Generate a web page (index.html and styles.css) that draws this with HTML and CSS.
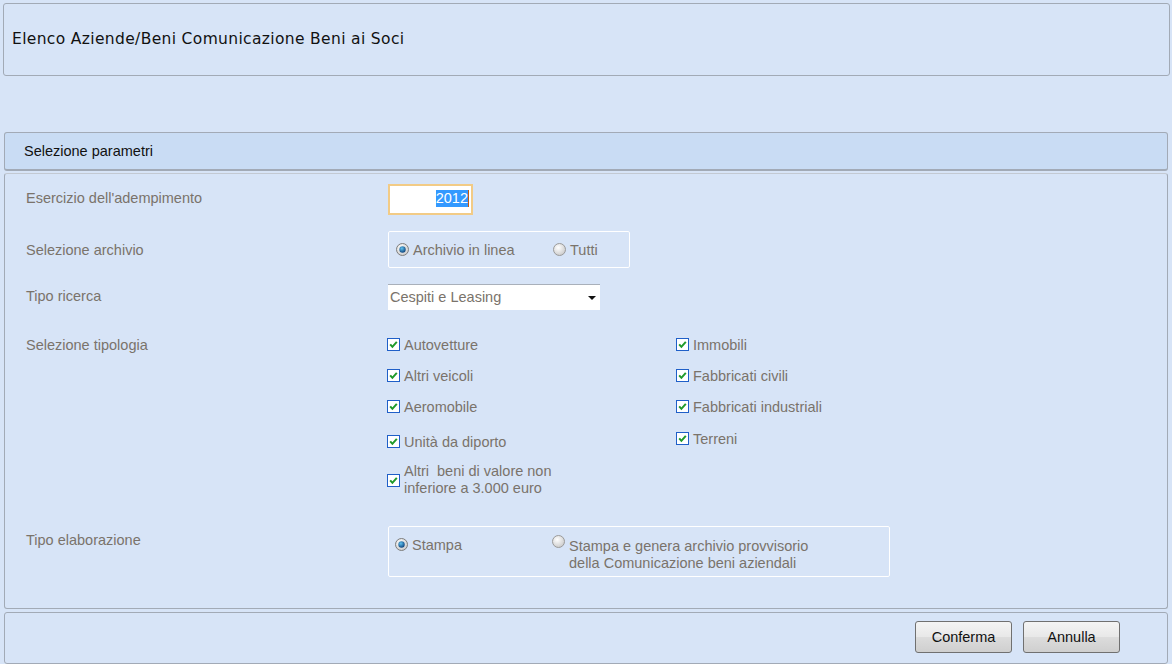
FILE: index.html
```html
<!DOCTYPE html>
<html lang="it">
<head>
<meta charset="utf-8">
<title>Elenco Aziende/Beni Comunicazione Beni ai Soci</title>
<link rel="stylesheet" href="styles.css">
</head>
<body>
<div class="page">
  <div class="title-box">Elenco Aziende/Beni Comunicazione Beni ai Soci</div>

  <div class="section-head">Selezione parametri</div>

  <div class="panel">
    <div class="row row-anno">
      <div class="label">Esercizio dell'adempimento</div>
      <div class="ctrl">
        <div class="year-input"><span class="sel">2012</span></div>
      </div>
    </div>

    <div class="row row-archivio">
      <div class="label">Selezione archivio</div>
      <div class="ctrl">
        <div class="group group-archivio">
          <label class="radio r-linea">
            <svg class="rd" width="13" height="13" viewBox="0 0 13 13"><defs><radialGradient id="rg1" cx="0.4" cy="0.35" r="0.7"><stop offset="0" stop-color="#ffffff"/><stop offset="1" stop-color="#c9c9c9"/></radialGradient><radialGradient id="dot1" cx="0.4" cy="0.35" r="0.7"><stop offset="0" stop-color="#5fc2f0"/><stop offset="1" stop-color="#0b3e78"/></radialGradient></defs><circle cx="6.5" cy="6.5" r="6" fill="url(#rg1)" stroke="#7d7d7d"/><circle cx="6.5" cy="6.5" r="3.2" fill="url(#dot1)"/></svg>
            <span>Archivio in linea</span>
          </label>
          <label class="radio r-tutti">
            <svg class="rd" width="13" height="13" viewBox="0 0 13 13"><circle cx="6.5" cy="6.5" r="6" fill="url(#rg1)" stroke="#9a9a9a"/></svg>
            <span>Tutti</span>
          </label>
        </div>
      </div>
    </div>

    <div class="row row-ricerca">
      <div class="label">Tipo ricerca</div>
      <div class="ctrl">
        <div class="select"><span>Cespiti e Leasing</span><span class="arrow"></span></div>
      </div>
    </div>

    <div class="row row-tipologia">
      <div class="label">Selezione tipologia</div>
      <div class="ctrl checks">
        <div class="col col1">
          <label class="cb"><svg width="13" height="13" viewBox="0 0 13 13"><rect x="0.5" y="0.5" width="12" height="12" fill="#fff" stroke="#1f5fc8"/><path d="M3.2 6.3 L5.4 8.8 L9.8 3.8" fill="none" stroke="#1f9a2a" stroke-width="2"/></svg><span>Autovetture</span></label>
          <label class="cb"><svg width="13" height="13" viewBox="0 0 13 13"><rect x="0.5" y="0.5" width="12" height="12" fill="#fff" stroke="#1f5fc8"/><path d="M3.2 6.3 L5.4 8.8 L9.8 3.8" fill="none" stroke="#1f9a2a" stroke-width="2"/></svg><span>Altri veicoli</span></label>
          <label class="cb"><svg width="13" height="13" viewBox="0 0 13 13"><rect x="0.5" y="0.5" width="12" height="12" fill="#fff" stroke="#1f5fc8"/><path d="M3.2 6.3 L5.4 8.8 L9.8 3.8" fill="none" stroke="#1f9a2a" stroke-width="2"/></svg><span>Aeromobile</span></label>
          <label class="cb cb-diporto"><svg width="13" height="13" viewBox="0 0 13 13"><rect x="0.5" y="0.5" width="12" height="12" fill="#fff" stroke="#1f5fc8"/><path d="M3.2 6.3 L5.4 8.8 L9.8 3.8" fill="none" stroke="#1f9a2a" stroke-width="2"/></svg><span>Unità da diporto</span></label>
          <label class="cb cb-altri"><svg width="13" height="13" viewBox="0 0 13 13"><rect x="0.5" y="0.5" width="12" height="12" fill="#fff" stroke="#1f5fc8"/><path d="M3.2 6.3 L5.4 8.8 L9.8 3.8" fill="none" stroke="#1f9a2a" stroke-width="2"/></svg><span>Altri&nbsp; beni di valore non<br>inferiore a 3.000 euro</span></label>
        </div>
        <div class="col col2">
          <label class="cb"><svg width="13" height="13" viewBox="0 0 13 13"><rect x="0.5" y="0.5" width="12" height="12" fill="#fff" stroke="#1f5fc8"/><path d="M3.2 6.3 L5.4 8.8 L9.8 3.8" fill="none" stroke="#1f9a2a" stroke-width="2"/></svg><span>Immobili</span></label>
          <label class="cb"><svg width="13" height="13" viewBox="0 0 13 13"><rect x="0.5" y="0.5" width="12" height="12" fill="#fff" stroke="#1f5fc8"/><path d="M3.2 6.3 L5.4 8.8 L9.8 3.8" fill="none" stroke="#1f9a2a" stroke-width="2"/></svg><span>Fabbricati civili</span></label>
          <label class="cb"><svg width="13" height="13" viewBox="0 0 13 13"><rect x="0.5" y="0.5" width="12" height="12" fill="#fff" stroke="#1f5fc8"/><path d="M3.2 6.3 L5.4 8.8 L9.8 3.8" fill="none" stroke="#1f9a2a" stroke-width="2"/></svg><span>Fabbricati industriali</span></label>
          <label class="cb cb-terreni"><svg width="13" height="13" viewBox="0 0 13 13"><rect x="0.5" y="0.5" width="12" height="12" fill="#fff" stroke="#1f5fc8"/><path d="M3.2 6.3 L5.4 8.8 L9.8 3.8" fill="none" stroke="#1f9a2a" stroke-width="2"/></svg><span>Terreni</span></label>
        </div>
      </div>
    </div>

    <div class="row row-elab">
      <div class="label">Tipo elaborazione</div>
      <div class="ctrl">
        <div class="group group-elab">
          <label class="radio r-stampa">
            <svg class="rd" width="13" height="13" viewBox="0 0 13 13"><circle cx="6.5" cy="6.5" r="6" fill="url(#rg1)" stroke="#7d7d7d"/><circle cx="6.5" cy="6.5" r="3.2" fill="url(#dot1)"/></svg>
            <span>Stampa</span>
          </label>
          <label class="radio r-genera">
            <svg class="rd" width="13" height="13" viewBox="0 0 13 13"><circle cx="6.5" cy="6.5" r="6" fill="url(#rg1)" stroke="#9a9a9a"/></svg>
            <span>Stampa e genera archivio provvisorio<br>della Comunicazione beni aziendali</span>
          </label>
        </div>
      </div>
    </div>
  </div>

  <div class="footer">
    <button class="btn">Conferma</button>
    <button class="btn">Annulla</button>
  </div>
</div>
</body>
</html>
```

FILE: styles.css
```css
* { box-sizing: border-box; }
html, body {
  margin: 0;
  padding: 0;
  background: #d7e4f7;
  width: 1172px;
  height: 664px;
  overflow: hidden;
}
body {
  font-family: "Liberation Sans", Arial, sans-serif;
  font-size: 14.5px;
}
.page {
  padding: 3px 2px 0 3px;
  display: flex;
  flex-direction: column;
}
.title-box {
  height: 73px;
  border: 1px solid #a2aab6;
  border-radius: 3px;
  display: flex;
  align-items: center;
  padding: 0 0 2px 8px;
  font-family: "DejaVu Sans", Verdana, sans-serif;
  font-size: 15.5px;
  letter-spacing: 0.35px;
  color: #111;
}
.section-head {
  margin: 56px 2px 0 1px;
  height: 39px;
  background: #c9dcf4;
  border: 1px solid #a2aab6;
  border-bottom-width: 2px;
  border-radius: 3px;
  display: flex;
  align-items: center;
  padding-left: 19px;
  color: #111;
}
.panel {
  margin: 2px 2px 0 1px;
  height: 436px;
  border: 1px solid #a2aab6;
  border-top-color: #c3c9d2;
  border-radius: 3px;
  padding: 10px 0 0 21px;
  display: flex;
  flex-direction: column;
  color: #7a736b;
}
.row {
  display: flex;
}
.label {
  width: 362px;
  flex: none;
}
.row-anno { height: 31px; align-items: center; }
.row-anno .label { margin-top: -3px; }
.row-archivio { margin-top: 16px; height: 37px; align-items: center; }
.row-ricerca { margin-top: 16px; height: 26px; align-items: center; }
.row-ricerca .label { margin-top: -2px; }
.row-tipologia { margin-top: 26px; }
.row-tipologia .label { padding-top: 1px; }
.row-elab { margin-top: 15px; }
.row-elab .label { padding-top: 6px; }

.year-input {
  width: 85px;
  height: 31px;
  background: #fff;
  border: 2px solid #f2cb86;
  display: flex;
  align-items: center;
  justify-content: flex-end;
  padding: 0 2px 3px 0;
}
.sel {
  background: #3399ff;
  color: #fff;
  line-height: 17px;
  border-right: 1px solid #c05a10;
}
.group {
  border: 1px solid #fff;
  border-radius: 2px;
  display: flex;
  position: relative;
}
.group-archivio {
  width: 242px;
  height: 37px;
  align-items: center;
  padding-left: 7px;
}
.radio {
  display: flex;
  align-items: center;
  gap: 4px;
}
.radio .rd { flex: none; }
.r-linea { width: 157px; }
.select {
  width: 212px;
  height: 26px;
  background: #fff;
  border-top: 1px solid #a9b0ba;
  display: flex;
  align-items: center;
  justify-content: space-between;
  padding: 0 4px 1px 2px;
}
.arrow {
  width: 0;
  height: 0;
  border-left: 4px solid transparent;
  border-right: 4px solid transparent;
  border-top: 4px solid #111;
  margin-top: 1px;
}
.checks {
  display: flex;
  margin-left: -1px;
}
.col {
  display: flex;
  flex-direction: column;
}
.col1 { width: 289px; }
.cb {
  display: flex;
  align-items: center;
  gap: 4px;
  height: 17px;
  margin-bottom: 14px;
}
.cb svg { flex: none; }
.cb-diporto { margin-top: 4px; }
.cb-terreni { margin-top: 1px; }
.cb-altri {
  height: 34px;
  margin-top: -1px;
  line-height: 17px;
}
.group-elab {
  width: 502px;
  height: 51px;
  padding: 9px 0 0 6px;
  align-items: flex-start;
}
.r-stampa { width: 157px; align-items: center; height: 17px; }
.r-genera { align-items: flex-start; line-height: 17px; padding-top: 2px; }
.r-genera .rd { margin-top: -3px; }

.footer {
  margin: 3px 2px 0 1px;
  height: 52px;
  border: 1px solid #a2aab6;
  border-radius: 3px;
  display: flex;
  justify-content: flex-end;
  align-items: flex-start;
  padding: 8px 47px 0 0;
  gap: 11px;
}
.btn {
  width: 97px;
  height: 32px;
  font-family: "Liberation Sans", Arial, sans-serif;
  font-size: 14.5px;
  color: #111;
  border: 1px solid #707070;
  border-radius: 3px;
  background: linear-gradient(#f4f4f4 0%, #e8e8e8 50%, #dcdcdc 51%, #cfcfcf 100%);
  padding: 0;
}
```
